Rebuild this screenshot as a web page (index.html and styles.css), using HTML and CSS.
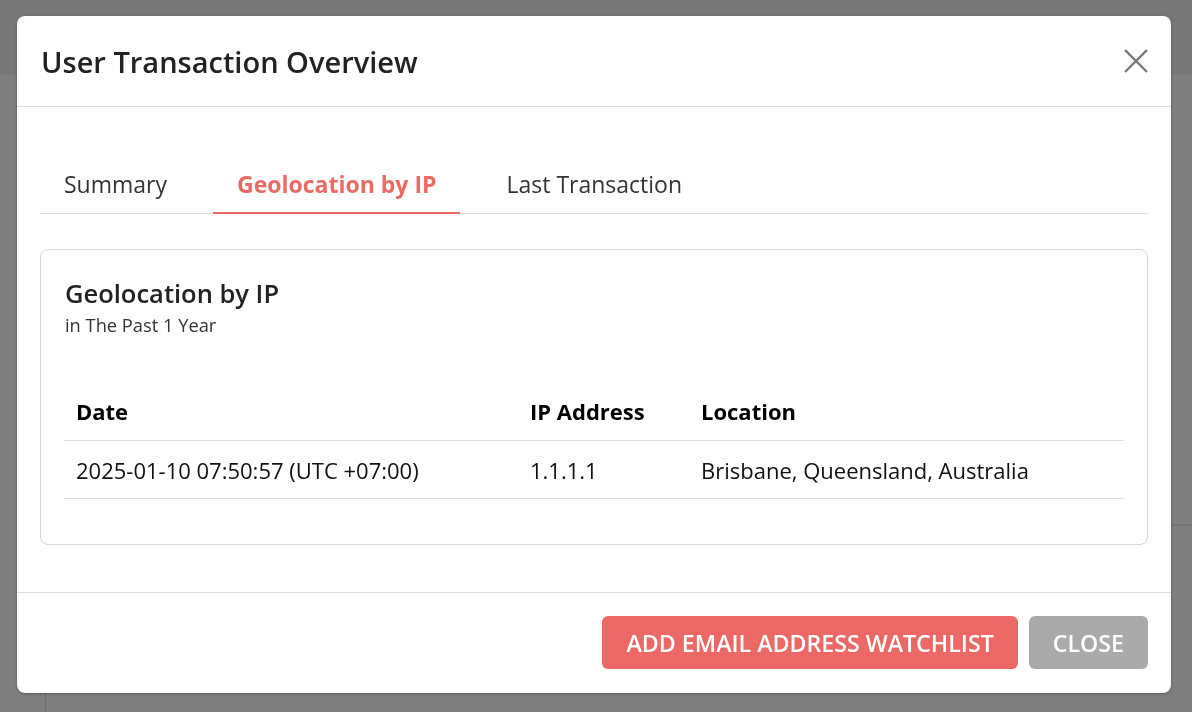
FILE: index.html
```html
<!DOCTYPE html>
<html lang="en">
  <head>
    <meta charset="UTF-8" />
    <meta name="viewport" content="width=device-width, initial-scale=1.0" />
    <title>User Transaction Overview</title>
    <link rel="stylesheet" href="styles.css">
  </head>
  <body>
    <div class="page">
      <div class="topbar"></div>
      <div class="page-body">
        <div class="panel"></div>
      </div>
    </div>

    <div class="backdrop">
      <div class="modal">
        <div class="modal-header">
          <h2 class="modal-title">User Transaction Overview</h2>
          <button type="button" class="close-icon" aria-label="Close">
            <svg width="24" height="24" viewBox="0 0 24 24">
              <path d="M1 1 L23 23 M23 1 L1 23" stroke="#757575" stroke-width="2.4" fill="none" />
            </svg>
          </button>
        </div>

        <div class="modal-body">
          <div class="tabs">
            <div class="tab">Summary</div>
            <div class="tab active">Geolocation by IP</div>
            <div class="tab">Last Transaction</div>
          </div>

          <div class="card">
            <div class="card-title">Geolocation by IP</div>
            <div class="card-subtitle">in The Past 1 Year</div>

            <table class="geo-table">
              <thead>
                <tr>
                  <th class="col-date">Date</th>
                  <th class="col-ip">IP Address</th>
                  <th>Location</th>
                </tr>
              </thead>
              <tbody>
                <tr>
                  <td>2025-01-10 07:50:57 (UTC +07:00)</td>
                  <td>1.1.1.1</td>
                  <td>Brisbane, Queensland, Australia</td>
                </tr>
              </tbody>
            </table>
          </div>
        </div>

        <div class="modal-footer">
          <button type="button" class="btn btn-primary">Add Email Address Watchlist</button>
          <button type="button" class="btn btn-secondary">Close</button>
        </div>
      </div>
    </div>
  </body>
</html>
```

FILE: styles.css
```css
body {
  margin: 0;
  background-color: #7f7f7f;
  font-family: "Open Sans", "Noto Sans", sans-serif;
  height: 712px;
  overflow: hidden;
}

.page {
  display: flex;
  flex-direction: column;
  height: 100%;
}

.topbar {
  height: 75px;
  background-color: #777777;
}

.page-body {
  flex: 1;
  padding: 449px 0 0 45px;
}

.panel {
  height: 100%;
  border-left: 1px solid #6e6e6e;
  border-top: 1px solid #747474;
  box-shadow: inset 0 23px 0 -22px #747474;
}

.backdrop {
  position: fixed;
  inset: 0;
  display: flex;
  justify-content: flex-start;
  padding: 16px 0 0 17px;
}

.modal {
  width: 1154px;
  height: 677px;
  background-color: #ffffff;
  border-radius: 8px;
  box-shadow: 0 1px 3px rgba(0, 0, 0, 0.3);
  display: flex;
  flex-direction: column;
  box-sizing: border-box;
}

.modal-header {
  height: 91px;
  box-sizing: border-box;
  display: flex;
  align-items: center;
  justify-content: space-between;
  padding: 0 23px 0 24px;
  border-bottom: 1px solid #dedede;
}

.modal-title {
  margin: 0;
  font-size: 29px;
  font-weight: 600;
  color: #222222;
}

.close-icon {
  background: none;
  border: none;
  padding: 0;
  width: 24px;
  height: 24px;
  cursor: pointer;
}

.modal-body {
  flex: 1;
  padding: 50px 23px 0 23px;
}

.tabs {
  display: flex;
  gap: 22px;
  border-bottom: 1px solid #e0e0e0;
}

.tab {
  padding: 12px 24px 12px;
  font-size: 23px;
  line-height: 31px;
  color: #333333;
  border-bottom: 2px solid transparent;
  margin-bottom: -1px;
}

.tab.active {
  color: #ec6a66;
  font-weight: 700;
  border-bottom-color: #ec6a66;
}

.card {
  margin-top: 35px;
  border: 1px solid #d6d6d6;
  border-radius: 8px;
  padding: 26px 23px 0 24px;
  height: 296px;
  box-sizing: border-box;
}

.card-title {
  font-size: 25.5px;
  font-weight: 600;
  color: #222222;
  line-height: 34px;
}

.card-subtitle {
  font-size: 18.3px;
  color: #333333;
  line-height: 24px;
  margin-top: 3px;
}

.geo-table {
  width: calc(100% + 1px);
  margin-left: -1px;
  border-collapse: collapse;
  margin-top: 45px;
  color: #111111;
  font-size: 22px;
}

.geo-table th {
  text-align: left;
  font-weight: 700;
  color: #000000;
  padding: 0 12px;
  height: 58px;
  border-bottom: 1px solid #dedede;
}

.geo-table td {
  padding: 0 12px;
  height: 57px;
  border-bottom: 1px solid #dedede;
}

.col-date {
  width: 430px;
}

.col-ip {
  width: 147px;
}

.modal-footer {
  border-top: 1px solid #dedede;
  padding: 23px 23px 24px;
  display: flex;
  justify-content: flex-end;
  gap: 11px;
}

.btn {
  height: 53px;
  border: none;
  border-radius: 6px;
  font-family: "Open Sans", "Noto Sans", sans-serif;
  font-size: 23.2px;
  font-weight: 600;
  text-transform: uppercase;
  color: #ffffff;
  padding: 0 24px;
  cursor: pointer;
}

.btn-primary {
  background-color: #ec6865;
}

.btn-secondary {
  background-color: #aaaaaa;
}
```
